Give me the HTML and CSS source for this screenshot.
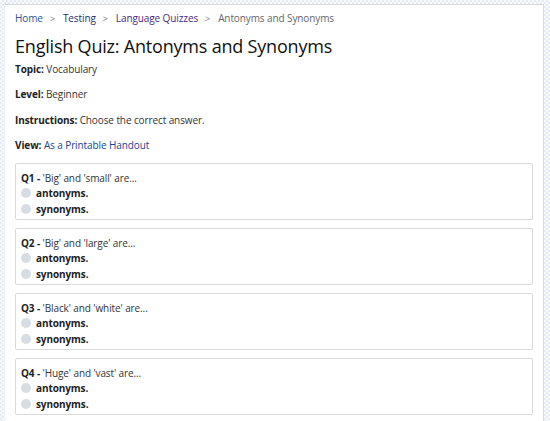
FILE: index.html
```html
<!DOCTYPE html>
<html>
<head>
<meta charset="utf-8">
<link rel="stylesheet" href="styles.css">
</head>
<body>
<div class="page">
  <nav class="crumbs">
    <a class="c-home" href="#">Home</a><span class="sep">&gt;</span>
    <a class="c-test" href="#">Testing</a><span class="sep">&gt;</span>
    <a class="c-lang" href="#">Language Quizzes</a><span class="sep">&gt;</span>
    <span class="c-cur">Antonyms and Synonyms</span>
  </nav>
  <h1 class="title">English Quiz: Antonyms and Synonyms</h1>
  <p class="meta"><b>Topic:</b> Vocabulary</p>
  <p class="meta"><b>Level:</b> Beginner</p>
  <p class="meta"><b>Instructions:</b> Choose the correct answer.</p>
  <p class="meta"><b>View:</b> <a class="link" href="#">As a Printable Handout</a></p>

  <div class="questions">
    <div class="q">
      <div class="qline"><b>Q1 -</b> 'Big' and 'small' are...</div>
      <div class="opt"><span class="radio"></span><b>antonyms.</b></div>
      <div class="opt"><span class="radio"></span><b>synonyms.</b></div>
    </div>
    <div class="q">
      <div class="qline"><b>Q2 -</b> 'Big' and 'large' are...</div>
      <div class="opt"><span class="radio"></span><b>antonyms.</b></div>
      <div class="opt"><span class="radio"></span><b>synonyms.</b></div>
    </div>
    <div class="q">
      <div class="qline"><b>Q3 -</b> 'Black' and 'white' are...</div>
      <div class="opt"><span class="radio"></span><b>antonyms.</b></div>
      <div class="opt"><span class="radio"></span><b>synonyms.</b></div>
    </div>
    <div class="q">
      <div class="qline"><b>Q4 -</b> 'Huge' and 'vast' are...</div>
      <div class="opt"><span class="radio"></span><b>antonyms.</b></div>
      <div class="opt"><span class="radio"></span><b>synonyms.</b></div>
    </div>
  </div>
</div>
</body>
</html>
```
FILE: styles.css
```css
html, body {
  margin: 0;
  height: 100%;
}
body {
  background-color: #f3f6f9;
  background-image: repeating-conic-gradient(#e4ebf3 0 25%, #f7f9fb 0 50%);
  background-size: 4px 4px;
  font-family: "Open Sans", "Noto Sans", sans-serif;
  font-size: 10px;
  letter-spacing: -0.1px;
  color: #333;
  padding: 4px 6px 0 5px;
  box-sizing: border-box;
  overflow: hidden;
}
.page {
  background: #fff;
  border-top: 1px solid #d9d9d9;
  border-right: 1px solid #d9d9d9;
  padding: 5px 10px 0 10px;
  min-height: 420px;
}
.crumbs {
  display: flex;
  align-items: baseline;
  height: 16px;
  line-height: 16px;
}
.crumbs a { text-decoration: none; }
.sep {
  color: #777;
  margin: 0 8px 0 7px;
  font-size: 9px;
}
.c-home { color: #2b5597; }
.c-test { color: #1e2d6b; }
.c-lang { color: #4a2a7d; }
.c-cur { color: #666; }
.title {
  font-size: 18px;
  font-weight: 400;
  letter-spacing: -0.2px;
  color: #111;
  margin: 7px 0 3px;
  line-height: 26px;
}
.meta {
  margin: 0 0 10px;
  line-height: 15.4px;
  color: #333;
}
.meta b { color: #222; }
.link { color: #23438f; text-decoration: none; }
.questions {
  display: flex;
  flex-direction: column;
  gap: 8px;
  margin-top: -1px;
  width: 518px;
}
.q {
  border: 1px solid #d9d9d9;
  border-radius: 2px;
  padding: 6px 5px 4px;
  height: 57px;
  box-sizing: border-box;
}
.qline {
  line-height: 16px;
  margin-bottom: -1px;
  color: #333;
}
.qline b { color: #222; }
.opt {
  display: flex;
  align-items: center;
  height: 16px;
  line-height: 16px;
  color: #222;
}
.radio {
  width: 10px;
  height: 10px;
  border-radius: 50%;
  background: #d7dde5;
  margin: 0 5px 0 0;
  flex: none;
}
```
